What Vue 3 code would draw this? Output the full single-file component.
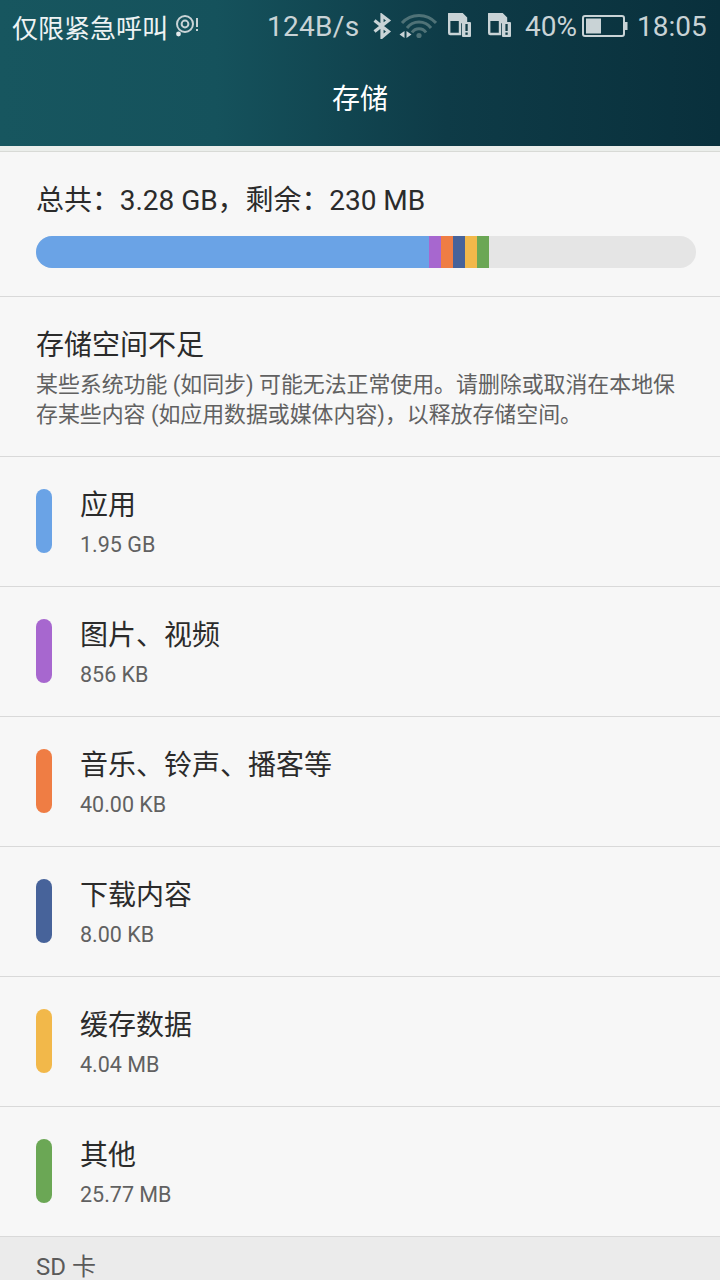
<script setup>
const bar = [
  { c: '#6aa3e6', w: 393 },
  { c: '#a767cf', w: 12 },
  { c: '#ef7d44', w: 12 },
  { c: '#47639a', w: 12 },
  { c: '#f2b84a', w: 12 },
  { c: '#6ba755', w: 12 },
]
const rows = [
  { t: '应用', s: '1.95 GB', c: '#6aa3e6' },
  { t: '图片、视频', s: '856 KB', c: '#a767cf' },
  { t: '音乐、铃声、播客等', s: '40.00 KB', c: '#ef7d44' },
  { t: '下载内容', s: '8.00 KB', c: '#47639a' },
  { t: '缓存数据', s: '4.04 MB', c: '#f2b84a' },
  { t: '其他', s: '25.77 MB', c: '#6ba755' },
]
</script>

<template>
  <div class="page">
    <header class="head">
      <div class="status">
        <span class="carrier">仅限紧急呼叫</span>
        <svg class="i-nfc" width="24" height="24" viewBox="0 0 24 24">
          <circle cx="10" cy="10" r="8" fill="none" stroke="#c9d3d6" stroke-width="2" />
          <circle cx="10" cy="10" r="3.4" fill="none" stroke="#c9d3d6" stroke-width="2" />
          <circle cx="3.5" cy="20" r="2.4" fill="#e4eaec" />
          <rect x="21" y="4" width="2" height="9" fill="#c9d3d6" />
          <rect x="21" y="15" width="2" height="2" fill="#c9d3d6" />
        </svg>
        <span class="speed">124B/s</span>
        <svg class="i-bt" width="20" height="26" viewBox="0 0 20 26">
          <path d="M2.500 7.500 L16.500 18.500 L10 24 V2.500 L16.500 7.500 L2.500 18.500" fill="none" stroke="#c9d3d6" stroke-width="3.200" />
        </svg>
        <svg class="i-wifi" width="38" height="26" viewBox="0 0 38 26">
          <path d="M3 10 A23 23 0 0 1 37 10" fill="none" stroke="#4f7277" stroke-width="3" />
          <path d="M8 15 A15 15 0 0 1 32 15" fill="none" stroke="#4f7277" stroke-width="3" />
          <path d="M13 19.500 A8.500 8.500 0 0 1 27 19.500" fill="none" stroke="#4f7277" stroke-width="3" />
          <circle cx="20" cy="22.500" r="2.600" fill="#4f7277" />
          <path d="M5.500 18 V25 L0.500 21.500 Z M7.500 18 L12.500 21.500 L7.500 25 Z" fill="#c9d3d6" />
        </svg>
        <svg v-for="n in 2" :key="n" class="i-sim" width="24" height="26" viewBox="0 1 24 26">
          <path d="M1.200 2 Q1.200 1 2.200 1 H13 L18 6 V10 H12 V22 H2.200 Q1.200 22 1.200 21 Z" fill="none" stroke="#c9d3d6" stroke-width="2.400" />
          <path d="M2 1 H13 L18 6 V9 H2 Z" fill="#c9d3d6" />
          <rect x="14" y="10" width="9" height="15" rx="1" fill="#c9d3d6" />
          <rect x="17.400" y="12" width="2.300" height="7" fill="#123c46" />
          <rect x="17.400" y="20.500" width="2.300" height="2.300" fill="#123c46" />
        </svg>
        <span class="pct">40%</span>
        <svg class="i-bat" width="46" height="24" viewBox="0 0 46 24">
          <rect x="1" y="2" width="41" height="20" rx="2" fill="none" stroke="#c9d3d6" stroke-width="2" />
          <rect x="4" y="4.500" width="15" height="15" fill="#c9d3d6" />
          <rect x="43" y="8" width="2.500" height="8" fill="#c9d3d6" />
        </svg>
        <span class="time">18:05</span>
      </div>
      <div class="title">存储</div>
    </header>
    <div class="strip"></div>

    <section class="total">
      <div class="total-text">总共：3.28 GB，剩余：230 MB</div>
      <div class="bar">
        <i v-for="b in bar" :key="b.c" class="seg" :style="{ background: b.c, width: b.w + 'px' }"></i>
      </div>
    </section>

    <section class="warn">
      <div class="warn-title">存储空间不足</div>
      <div class="warn-text">某些系统功能 (如同步) 可能无法正常使用。请删除或取消在本地保存某些内容 (如应用数据或媒体内容)，以释放存储空间。</div>
    </section>

    <section v-for="r in rows" :key="r.t" class="row">
      <i class="pill" :style="{ background: r.c }"></i>
      <div class="row-body">
        <div class="row-title">{{ r.t }}</div>
        <div class="row-sub">{{ r.s }}</div>
      </div>
    </section>

    <div class="sd">SD 卡</div>
  </div>
</template>

<style>
html, body { margin: 0; background: #f7f7f7; }
</style>

<style scoped>
.page {
  width: 720px;
  height: 1280px;
  overflow: hidden;
  background: #f7f7f7;
  font-family: Roboto, "Noto Sans CJK SC", sans-serif;
  color: #2b2b2b;
}
.head {
  height: 146px;
  background: linear-gradient(90deg, #17565f 0%, #15525c 30%, #0e3b47 62%, #09303c 100%);
}
.status {
  height: 52px;
  display: flex;
  align-items: center;
  padding: 0 12px;
  color: #c9d3d6;
  font-size: 28px;
}
.carrier { color: #eef3f4; font-size: 26px; width: 156px; white-space: nowrap; }
.i-nfc { margin-left: 7px; }
.speed { margin-left: 68px; width: 91px; letter-spacing: 0.3px; white-space: nowrap; }
.i-bt { margin-left: 14px; }
.i-wifi { margin-left: 7px; }
.i-sim { margin-left: 11px; }
.i-sim + .i-sim { margin-left: 16px; }
.pct { margin-left: 13px; }
.i-bat { margin-left: 5px; }
.time { margin-left: 9px; }
.title {
  height: 92px;
  padding-top: 2px;
  box-sizing: border-box;
  line-height: 92px;
  text-align: center;
  color: #fff;
  font-size: 28px;
}
.strip { height: 5px; background: #ebeeeb; border-bottom: 1px solid #d8dad6; }
.total { height: 145px; box-sizing: border-box; padding: 31px 24px 0 36px; border-bottom: 1px solid #d9d9d9; }
.total-text { font-size: 28px; line-height: 36px; margin-right: 2px; letter-spacing: -0.05px; }
.bar {
  display: flex;
  height: 32px;
  margin-top: 17px;
  margin-right: 0;
  border-radius: 16px;
  overflow: hidden;
  background: #e5e5e5;
}
.seg { display: block; flex: none; }
.warn { height: 160px; box-sizing: border-box; padding: 31px 36px 0; border-bottom: 1px solid #d9d9d9; }
.warn-title { font-size: 28px; line-height: 36px; }
.warn-text { margin-top: 6px; font-size: 21.900px; line-height: 30px; color: #616161; }
.row { height: 130px; box-sizing: border-box; display: flex; align-items: center; padding-left: 36px; border-bottom: 1px solid #d9d9d9; }
.pill { display: block; width: 16px; height: 64px; border-radius: 8px; flex: none; margin-bottom: 1px; }
.row-body { margin-left: 28px; padding-top: 3px; }
.row-title { font-size: 28px; line-height: 38px; }
.row-sub { margin-top: 5px; font-size: 21.500px; line-height: 30px; color: #616161; }
.sd {
  height: 44px;
  box-sizing: border-box;
  padding: 14px 36px 0;
  background: #ebebeb;
  font-size: 24px;
  line-height: 32px;
  color: #5a5a5a;
}
</style>
